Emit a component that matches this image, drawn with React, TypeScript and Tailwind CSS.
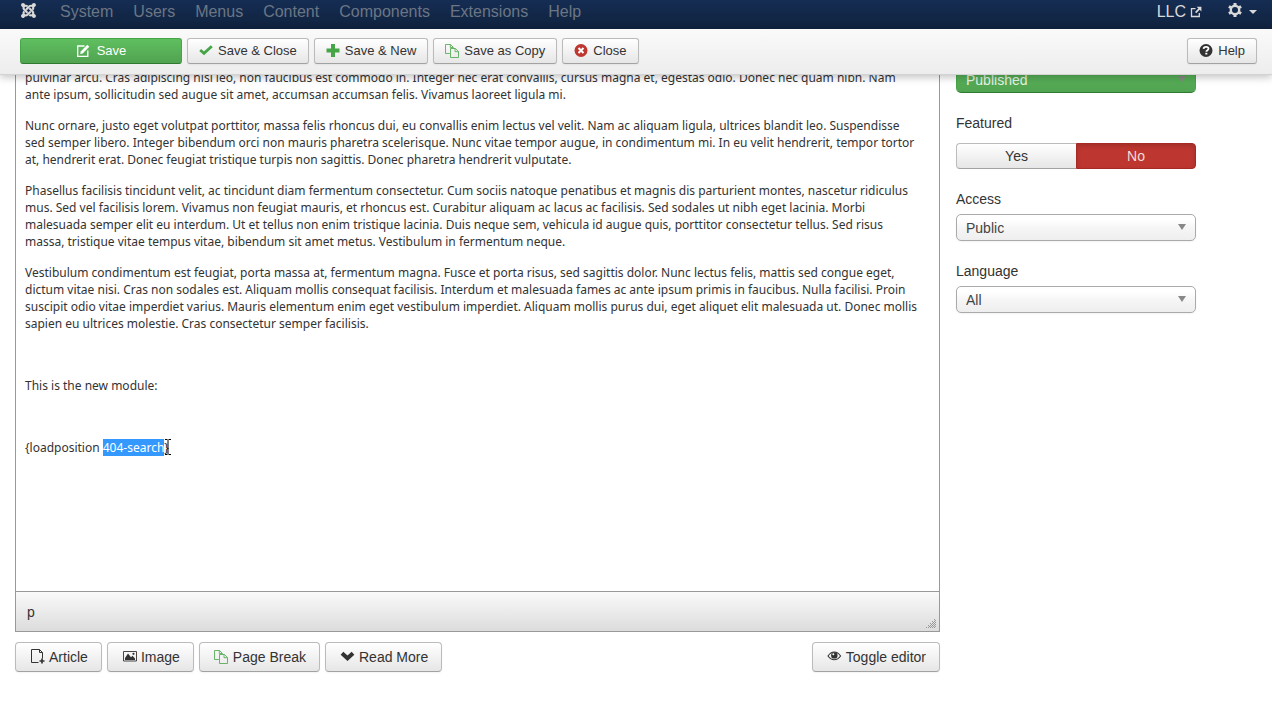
import type { ReactNode } from "react"
import { FaJoomla } from "react-icons/fa"

const MENU = ["System", "Users", "Menus", "Content", "Components", "Extensions", "Help"]

const PARAGRAPHS = [
  [
    "pulvinar arcu. Cras adipiscing nisi leo, non faucibus est commodo in. Integer nec erat convallis, cursus magna et, egestas odio. Donec nec quam nibh. Nam",
    "ante ipsum, sollicitudin sed augue sit amet, accumsan accumsan felis. Vivamus laoreet ligula mi.",
  ],
  [
    "Nunc ornare, justo eget volutpat porttitor, massa felis rhoncus dui, eu convallis enim lectus vel velit. Nam ac aliquam ligula, ultrices blandit leo. Suspendisse",
    "sed semper libero. Integer bibendum orci non mauris pharetra scelerisque. Nunc vitae tempor augue, in condimentum mi. In eu velit hendrerit, tempor tortor",
    "at, hendrerit erat. Donec feugiat tristique turpis non sagittis. Donec pharetra hendrerit vulputate.",
  ],
  [
    "Phasellus facilisis tincidunt velit, ac tincidunt diam fermentum consectetur. Cum sociis natoque penatibus et magnis dis parturient montes, nascetur ridiculus",
    "mus. Sed vel facilisis lorem. Vivamus non feugiat mauris, et rhoncus est. Curabitur aliquam ac lacus ac facilisis. Sed sodales ut nibh eget lacinia. Morbi",
    "malesuada semper elit eu interdum. Ut et tellus non enim tristique lacinia. Duis neque sem, vehicula id augue quis, porttitor consectetur tellus. Sed risus",
    "massa, tristique vitae tempus vitae, bibendum sit amet metus. Vestibulum in fermentum neque.",
  ],
  [
    "Vestibulum condimentum est feugiat, porta massa at, fermentum magna. Fusce et porta risus, sed sagittis dolor. Nunc lectus felis, mattis sed congue eget,",
    "dictum vitae nisi. Cras non sodales est. Aliquam mollis consequat facilisis. Interdum et malesuada fames ac ante ipsum primis in faucibus. Nulla facilisi. Proin",
    "suscipit odio vitae imperdiet varius. Mauris elementum enim eget vestibulum imperdiet. Aliquam mollis purus dui, eget aliquet elit malesuada ut. Donec mollis",
    "sapien eu ultrices molestie. Cras consectetur semper facilisis.",
  ],
]

interface IconProps {
  className?: string
}

function EditIcon() {
  return (
    <svg className="w-3.5 h-3.5" viewBox="0 0 14 14" fill="none" stroke="currentColor">
      <path d="M8.500 2H1.700v10.300h10.100V6.500" strokeWidth="1.3" />
      <path d="M11.300.8l2 2-6.600 6.600-2.500.5.5-2.500z" fill="currentColor" stroke="none" />
    </svg>
  )
}

function CheckIcon() {
  return (
    <svg className="w-3.5 h-3.5 text-[#46a546]" viewBox="0 0 14 14" fill="none" stroke="currentColor">
      <path d="M1.200 6l3.800 3.400 7.800-7.200" strokeWidth="2.8" />
    </svg>
  )
}

function PlusIcon() {
  return (
    <svg className="w-3.5 h-3.5 text-[#46a546]" viewBox="0 0 14 14" fill="currentColor">
      <path d="M5 0h4v4.500h4.500v4H9V13H5V8.500H.5v-4H5z" />
    </svg>
  )
}

function CopyIcon() {
  return (
    <svg className="w-3.5 h-3.5 text-[#46a546]" viewBox="0 0 14 14" fill="none" stroke="currentColor" strokeWidth="0.8">
      <path d="M4.800 9.500H.5v-9h5l2.700 2.700v1M5.300.5v3h2.800" />
      <path d="M5.500 4.500h4.800l3.200 3v6h-8zM10 4.500v3.200h3.400" />
    </svg>
  )
}

function CancelIcon() {
  return (
    <svg className="w-3.5 h-3.5" viewBox="0 0 14 14">
      <circle cx="7" cy="6.500" r="6.500" fill="#bd362f" />
      <path d="M4.500 4l5 5M9.500 4l-5 5" stroke="#fff" strokeWidth="2" />
    </svg>
  )
}

function HelpIcon() {
  return (
    <svg className="w-3.5 h-3.5" viewBox="0 0 14 14" fill="none">
      <circle cx="7" cy="6.500" r="6.500" fill="#333" />
      <path d="M4.600 4.900c.1-1.500 1.100-2 2.400-2s2.500.7 2.500 1.900c0 1.400-2.100 1.300-2.200 3" stroke="#fff" strokeWidth="1.800" />
      <path d="M6.300 8.800h2v1.700h-2z" fill="#fff" />
    </svg>
  )
}

function ExternalIcon() {
  return (
    <svg className="w-3 h-3" viewBox="0 0 12 12" fill="none" stroke="currentColor">
      <path d="M5.500 2.700H1.500v7.800h7.800V7" strokeWidth="1.3" />
      <path d="M6.600.7H11.400v4.800L9.700 3.800 6.300 7.200 5 5.900l3.400-3.400z" fill="currentColor" stroke="none" />
    </svg>
  )
}

function GearIcon() {
  return (
    <svg className="w-3.5 h-3.5" viewBox="0 0 14 14" fill="none" stroke="currentColor">
      <circle cx="7" cy="7" r="4.200" strokeWidth="2.400" />
      <path d="M7 0v2.600M7 11.400V14M.9 3.500l2.300 1.300M10.800 9.200l2.300 1.300M.9 10.500l2.300-1.300M10.800 4.800l2.300-1.300" strokeWidth="3" />
    </svg>
  )
}

function FilePlusIcon() {
  return (
    <svg className="w-4 h-4" viewBox="0 0 16 16" fill="none" stroke="currentColor">
      <path d="M9.500 13.500h-7v-13h8l3 3v6M10.500.5v3h3" />
      <path d="M13 9.500v5M10.500 12h5" strokeWidth="1.700" />
    </svg>
  )
}

function PictureIcon() {
  return (
    <svg className="w-4 h-4" viewBox="0 0 16 16">
      <path d="M2.500 2.500h13v9.500h-13z" fill="none" stroke="currentColor" strokeWidth="0.9" />
      <path d="M4 11V9l3-4.500 3 3.700 1.500-1.400L14 9.500V11z" fill="currentColor" />
      <circle cx="12.500" cy="4.800" r="1.100" fill="currentColor" />
    </svg>
  )
}

function ChevronIcon() {
  return (
    <svg className="w-4 h-4" viewBox="0 0 16 16" fill="none" stroke="currentColor">
      <path d="M3 4.300l5.500 5 5.500-5" strokeWidth="4" />
    </svg>
  )
}

function EyeIcon() {
  return (
    <svg className="w-4 h-4" viewBox="0 0 16 16" fill="none" stroke="currentColor">
      <path d="M2 7C4 4 6 3 8.300 3s4.300 1 6.300 4c-2 2.800-4 3.800-6.300 3.800S4 9.800 2 7z" strokeWidth="1.100" />
      <circle cx="8.300" cy="6.400" r="3.200" fill="currentColor" stroke="none" />
      <circle cx="7.300" cy="5.200" r="1" fill="#fff" stroke="none" />
    </svg>
  )
}

function CaretIcon({ className }: IconProps) {
  return (
    <svg className={className} viewBox="0 0 8 6" preserveAspectRatio="none" fill="currentColor">
      <path d="M0 0h8L4 6z" />
    </svg>
  )
}

function ResizeGrip() {
  return (
    <svg className="w-2.5 h-2.5 text-[#999]" viewBox="0 0 10 10" fill="none" stroke="currentColor" strokeDasharray="1 1">
      <path d="M0 9.500h10M2 7.500h8M4 5.500h6M6 3.500h4M8 1.500h2" />
      <path d="M3 8.500h7M5 6.500h5M7 4.500h3M9 2.500h1" />
    </svg>
  )
}

function ToolbarButton({ icon, label }: { icon: ReactNode; label: string }) {
  return (
    <button
      type="button"
      className="flex items-center gap-[5px] h-[26px] px-[11px] border border-[#bbb] border-b-[#a2a2a2] rounded-[3px] bg-linear-to-b from-white to-[#e6e6e6] text-[13px] leading-4 shadow-xs whitespace-nowrap"
    >
      {icon}
      {label}
    </button>
  )
}

function EditorButton({ icon, label }: { icon: ReactNode; label: string }) {
  return (
    <button
      type="button"
      className="flex items-center gap-1 h-[30px] px-[13px] border border-[#bbb] border-b-[#a2a2a2] rounded bg-linear-to-b from-white to-[#e6e6e6] text-sm shadow-xs whitespace-nowrap"
    >
      <span className="flex justify-center w-4">{icon}</span>
      {label}
    </button>
  )
}

function SelectField({ id, label, value }: { id: string; label: string; value: string }) {
  return (
    <div className="flex flex-col gap-[5px]">
      <label htmlFor={id} className="text-sm leading-5">
        {label}
      </label>
      <div className="relative">
        <select
          id={id}
          className="block w-full h-[27px] pl-[9px] appearance-none border border-[#aaa] rounded-[5px] bg-linear-to-b from-white from-20% via-[#f6f6f6] via-50% to-[#eee] text-sm text-[#444] shadow-xs"
        >
          <option>{value}</option>
        </select>
        <CaretIcon className="absolute right-2.5 top-2.5 w-2 h-1.5 text-[#888] pointer-events-none" />
      </div>
    </div>
  )
}

export default function App() {
  return (
    <div className="min-h-screen overflow-x-hidden bg-white font-['Liberation_Sans',Arial,sans-serif] text-[#333]">
      {/* Admin menu */}
      <nav className="flex items-start justify-between h-[29px] pl-5 pr-[15px] bg-linear-to-b from-[#152d53] to-[#10223e] text-base leading-6 text-[#6b7685]">
        <div className="flex items-start gap-[23px]">
          <a href="#" aria-label="Joomla" className="pt-0.5 text-[#d9d9d9]">
            <FaJoomla className="w-[17px] h-[17px]" />
          </a>
          <ul className="flex gap-5">
            {MENU.map((item) => (
              <li key={item}>
                <a href="#">{item}</a>
              </li>
            ))}
          </ul>
        </div>
        <div className="flex items-start gap-[26px] text-[#d9d9d9]">
          <a href="#" className="flex items-center gap-1">
            LLC
            <ExternalIcon />
          </a>
          <button type="button" aria-label="Settings" className="flex items-center gap-[7px] h-5">
            <GearIcon />
            <CaretIcon className="w-2 h-1 mt-1" />
          </button>
        </div>
      </nav>

      {/* Toolbar */}
      <div className="relative z-10 flex items-start justify-between h-[46px] pt-[9px] pl-5 pr-[15px] bg-linear-to-b from-[#fafafa] to-[#ededed] border-b border-[#d3d3d3] shadow-[0_2px_8px_rgba(0,0,0,0.25)]">
        <div className="flex gap-[5px]">
          <button
            type="button"
            className="flex items-center justify-center gap-[7px] w-[162px] h-[26px] border border-[#46a546] border-b-[#2f7a2f] rounded-[3px] bg-linear-to-b from-[#5fbf5f] to-[#51a351] text-[13px] leading-4 text-white"
          >
            <EditIcon />
            Save
          </button>
          <ToolbarButton icon={<CheckIcon />} label="Save & Close" />
          <ToolbarButton icon={<PlusIcon />} label="Save & New" />
          <ToolbarButton icon={<CopyIcon />} label="Save as Copy" />
          <ToolbarButton icon={<CancelIcon />} label="Close" />
        </div>
        <ToolbarButton icon={<HelpIcon />} label="Help" />
      </div>

      <main className="flex gap-4 -mt-[9px] px-[15px]">
        <section className="flex-1 min-w-0">
          <div className="border border-t-0 border-[#999]">
            {/* Article text */}
            <div className="flex flex-col gap-3.5 min-h-[525px] pt-[3px] px-[9px] font-['Noto_Sans',Tahoma,sans-serif] text-xs leading-[17px] whitespace-nowrap">
              {PARAGRAPHS.map((lines) => (
                <p key={lines[0]}>
                  {lines.map((line) => (
                    <span key={line} className="block">
                      {line}
                    </span>
                  ))}
                </p>
              ))}
              <p>&nbsp;</p>
              <p>This is the new module:</p>
              <p>&nbsp;</p>
              <p>
                {"{loadposition "}
                <span className="bg-[#3399ff] text-white">404-search</span>
                <span className="relative">
                  {"}"}
                  <svg className="absolute left-0 top-0 w-2 h-4 text-black" viewBox="0 0 8 16" fill="none" stroke="currentColor">
                    <path d="M1 .5h2.500M4.500.5H7M4 1v14M1 15.500h2.500M4.500 15.500H7" />
                  </svg>
                </span>
              </p>
            </div>
            {/* Path bar */}
            <div className="relative flex items-center h-10 px-[11px] border-t border-[#999] bg-linear-to-b from-[#fafafa] to-[#dcdcdc] text-sm">
              p
              <span className="absolute right-[3px] bottom-[3px]">
                <ResizeGrip />
              </span>
            </div>
          </div>

          <div className="flex justify-between pt-2.5">
            <div className="flex gap-[5px]">
              <EditorButton icon={<FilePlusIcon />} label="Article" />
              <EditorButton icon={<PictureIcon />} label="Image" />
              <EditorButton icon={<CopyIcon />} label="Page Break" />
              <EditorButton icon={<ChevronIcon />} label="Read More" />
            </div>
            <EditorButton icon={<EyeIcon />} label="Toggle editor" />
          </div>
        </section>

        <aside className="w-[301px] shrink-0">
          <div className="flex flex-col gap-5 w-60">
            <div className="relative">
              <select
                aria-label="Status"
                className="block w-full h-[27px] pl-[9px] appearance-none border border-[#46a546] border-b-[#2f7a2f] rounded-[5px] bg-linear-to-b from-[#5bb75b] to-[#51a351] text-sm text-[#e8f4e8]"
              >
                <option>Published</option>
              </select>
              <CaretIcon className="absolute right-2.5 top-2.5 w-2 h-1.5 text-[#888] pointer-events-none" />
            </div>

            <fieldset>
              <legend className="pb-2.5 text-sm leading-5">Featured</legend>
              <div className="grid grid-cols-2 text-sm">
                <label className="flex items-center justify-center h-[26px] border border-r-0 border-[#bbb] border-b-[#a2a2a2] rounded-l bg-linear-to-b from-white to-[#e6e6e6]">
                  <input type="radio" name="featured" className="sr-only" />
                  Yes
                </label>
                <label className="flex items-center justify-center h-[26px] border border-[#a52a24] rounded-r bg-[#bd362f] text-[#f3dcdb] shadow-[inset_0_2px_4px_rgba(0,0,0,0.15)]">
                  <input type="radio" name="featured" defaultChecked className="sr-only" />
                  No
                </label>
              </div>
            </fieldset>

            <SelectField id="access" label="Access" value="Public" />
            <SelectField id="language" label="Language" value="All" />
          </div>
        </aside>
      </main>
    </div>
  )
}
